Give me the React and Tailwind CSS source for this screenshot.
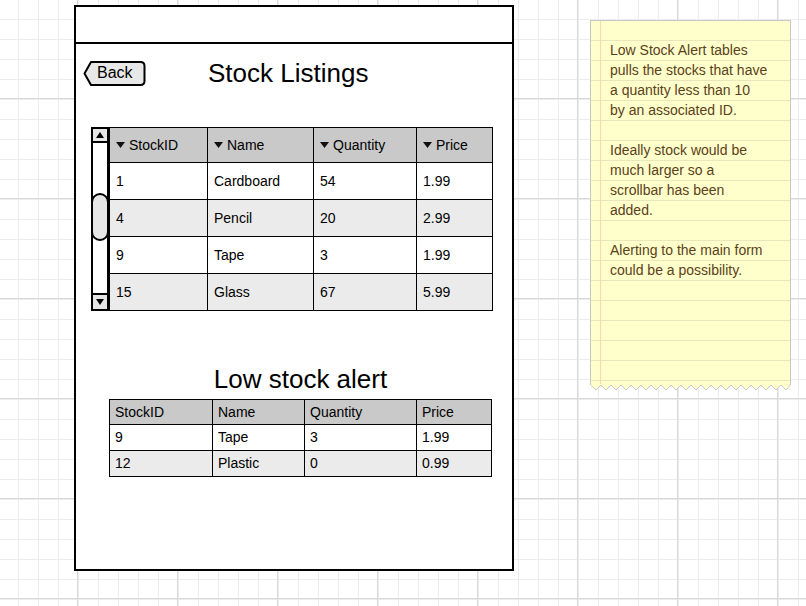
const stock = [
  { id: "1", name: "Cardboard", qty: "54", price: "1.99" },
  { id: "4", name: "Pencil", qty: "20", price: "2.99" },
  { id: "9", name: "Tape", qty: "3", price: "1.99" },
  { id: "15", name: "Glass", qty: "67", price: "5.99" },
]

const lowStock = [
  { id: "9", name: "Tape", qty: "3", price: "1.99" },
  { id: "12", name: "Plastic", qty: "0", price: "0.99" },
]

function SortArrow() {
  return (
    <svg width="9" height="6" viewBox="0 0 9 6" className="mr-[4px] shrink-0">
      <polygon points="0,0 9,0 4.5,6" fill="#111" />
    </svg>
  )
}

function Scrollbar() {
  return (
    <div className="w-[18px] h-[184px] border-2 border-black flex flex-col bg-white">
      <div className="h-[14px] border-b-2 border-black bg-[#e6e6e6] flex items-center justify-center">
        <svg width="8" height="6" viewBox="0 0 8 6">
          <polygon points="4,0 8,6 0,6" fill="#000" />
        </svg>
      </div>
      <div className="flex-1 flex flex-col">
        <div className="mt-[50px] -mx-[2px] h-[48px] rounded-full border-2 border-black bg-[#e6e6e6]" />
      </div>
      <div className="h-[16px] border-t-2 border-black bg-[#e6e6e6] flex items-center justify-center">
        <svg width="8" height="6" viewBox="0 0 8 6">
          <polygon points="0,0 8,0 4,6" fill="#000" />
        </svg>
      </div>
    </div>
  )
}

function StockTable() {
  const cell = "border-r border-b border-black pl-[6px] flex items-center"
  return (
    <div className="flex">
      <Scrollbar />
      <div className="border-t border-l border-black grid grid-cols-[98px_106px_103px_76px] auto-rows-[37px] grid-rows-[35px]">
        {["StockID", "Name", "Quantity", "Price"].map((h) => (
          <div key={h} className={`${cell} bg-[#c9c9c9]`}>
            <SortArrow />
            {h}
          </div>
        ))}
        {stock.map((row, i) => {
          const bg = i % 2 === 1 ? "bg-[#ebebeb]" : "bg-white"
          return [row.id, row.name, row.qty, row.price].map((v, j) => (
            <div key={`${i}-${j}`} className={`${cell} ${bg}`}>
              {v}
            </div>
          ))
        })}
      </div>
    </div>
  )
}

function LowStockTable() {
  const cell = "border-r border-b border-black pl-[5px] flex items-center"
  return (
    <div className="border-t border-l border-black grid grid-cols-[103px_92px_112px_75px] grid-rows-[25px] auto-rows-[26px]">
      {["StockID", "Name", "Quantity", "Price"].map((h) => (
        <div key={h} className={`${cell} bg-[#c9c9c9]`}>
          {h}
        </div>
      ))}
      {lowStock.map((row, i) => {
        const bg = i % 2 === 1 ? "bg-[#ebebeb]" : "bg-white"
        return [row.id, row.name, row.qty, row.price].map((v, j) => (
          <div key={`${i}-${j}`} className={`${cell} ${bg}`}>
            {v}
          </div>
        ))
      })}
    </div>
  )
}

function BackButton() {
  return (
    <div className="relative w-[63px] h-[25px] flex items-center">
      <svg width="63" height="25" viewBox="0 0 63 25" className="absolute left-0 top-0">
        <path
          d="M1.5 12.5 L8 1 H57.5 Q61.5 1 61.5 5 V20 Q61.5 24 57.5 24 H8 Z"
          fill="#e8e8e8"
          stroke="#000"
          strokeWidth="2"
          strokeLinejoin="round"
        />
      </svg>
      <span className="relative pl-[14px] text-[16px] leading-[20px] text-black">Back</span>
    </div>
  )
}

function StickyNote() {
  return (
    <div className="w-[201px] mt-[20px] flex flex-col">
      <div className="h-[365px] border-t border-l border-r border-[#c8c8c8] bg-[#ffffcc] [background-image:linear-gradient(to_right,transparent_9px,#f7d9ae_9px,#f7d9ae_10px,transparent_10px),repeating-linear-gradient(to_bottom,transparent_0,transparent_19px,#e9e6bb_19px,#e9e6bb_20px)] pl-[19px] pt-[19px] text-[14px] leading-[20px] text-[#5b4119]">
        <p>
          Low Stock Alert tables
          <br />
          pulls the stocks that have
          <br />
          a quantity less than 10
          <br />
          by an associated ID.
        </p>
        <p className="mt-[20px]">
          Ideally stock would be
          <br />
          much larger so a
          <br />
          scrollbar has been
          <br />
          added.
        </p>
        <p className="mt-[20px]">
          Alerting to the main form
          <br />
          could be a possibility.
        </p>
      </div>
      <svg width="201" height="7" viewBox="0 0 201 7" className="-mt-[1px]">
        <polygon
          points="0,0 201,0 201,1 196,6 191,1 186,6 181,1 176,6 171,1 166,6 161,1 156,6 151,1 146,6 141,1 136,6 131,1 126,6 121,1 116,6 111,1 106,6 101,1 96,6 91,1 86,6 81,1 76,6 71,1 66,6 61,1 56,6 51,1 46,6 41,1 36,6 31,1 26,6 21,1 16,6 11,1 6,6 0.5,1"
          fill="#ffffcc"
        />
        <polyline
          points="0.5,0 0.5,1 6,6 11,1 16,6 21,1 26,6 31,1 36,6 41,1 46,6 51,1 56,6 61,1 66,6 71,1 76,6 81,1 86,6 91,1 96,6 101,1 106,6 111,1 116,6 121,1 126,6 131,1 136,6 141,1 146,6 151,1 156,6 161,1 166,6 171,1 176,6 181,1 186,6 191,1 196,6 200.5,1 200.5,0"
          fill="none"
          stroke="#c8c8c8"
          strokeWidth="1"
        />
      </svg>
    </div>
  )
}

export default function App() {
  return (
    <div
      className="w-[806px] h-[606px] overflow-hidden bg-white flex font-['Liberation_Sans',Arial,sans-serif] text-[14px] text-black [background-image:linear-gradient(to_right,#d9d9d9_1px,transparent_1px),linear-gradient(to_bottom,#d9d9d9_1px,transparent_1px),linear-gradient(to_right,#ececec_1px,transparent_1px),linear-gradient(to_bottom,#ececec_1px,transparent_1px)] [background-size:100px_100px,100px_100px,20px_20px,20px_20px] [background-position:77px_0,0_98px,18px_0,0_19px]"
    >
      <div className="ml-[74px] mt-[5px] w-[440px] h-[566px] border-2 border-black bg-white flex flex-col shrink-0">
        <div className="h-[35px] border-b-2 border-black box-content" />
        <div className="mt-[14px] h-[30px] flex items-center">
          <div className="ml-[7px]">
            <BackButton />
          </div>
          <h1 className="ml-[62px] text-[26px] leading-[30px] font-normal">Stock Listings</h1>
        </div>
        <div className="ml-[15px] mt-[39px]">
          <StockTable />
        </div>
        <div className="ml-[33px] mt-[53px] w-[383px]">
          <h2 className="text-center text-[26px] leading-[30px] font-normal">Low stock alert</h2>
          <div className="mt-[5px]">
            <LowStockTable />
          </div>
        </div>
      </div>
      <div className="ml-[76px] shrink-0">
        <StickyNote />
      </div>
    </div>
  )
}
